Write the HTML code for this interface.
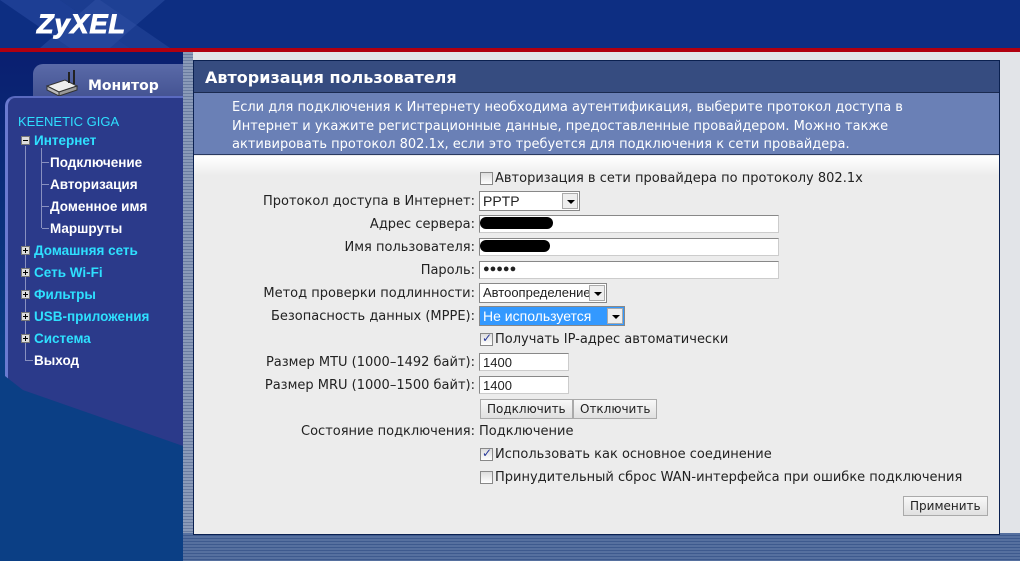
<!DOCTYPE html>
<html><head><meta charset="utf-8"><style>
*{margin:0;padding:0;box-sizing:border-box}
body{width:1020px;height:561px;overflow:hidden;position:relative;background:#0b3f85;font-family:"DejaVu Sans","Liberation Sans",sans-serif;font-size:13px;color:#222}
.a{position:absolute}
#hdr{left:0;top:0;width:1020px;height:48px;background:#0d2e82;overflow:hidden}
#red{left:0;top:48px;width:1020px;height:4px;background:#b00010}
#logo{left:37px;top:9px;color:#fff;font:italic bold 27px "Liberation Sans",sans-serif;letter-spacing:1px;-webkit-text-stroke:1px #fff}
#side{left:0;top:52px;width:183px;height:509px;background:linear-gradient(#0a1f70,#0b3f85 60%)}
#tab{left:33px;top:64px;width:150px;height:44px;background:linear-gradient(#5a6aa8,#3d4c8c);border-radius:10px 0 0 0}
#tab span{position:absolute;left:55px;top:14px;color:#fff;font-weight:bold;font-size:14px}
#nav{left:5px;top:96px;width:178px;height:350px;background:#2b3a8a;border-radius:10px 0 0 0;border-left:3px solid #6a7ad0;border-top:2px solid #5a6ac0;clip-path:polygon(0 0,100% 0,100% 100%,10% 84%,0 80%)}
.n{position:absolute;font:bold 13.5px "Liberation Sans",sans-serif;color:#fff}
.c{color:#2ee0ff}
.pm{position:absolute;width:9px;height:9px;background:#ddd;border:1px solid #777}
.pm::before{content:"";position:absolute;left:1px;top:3px;width:5px;height:1px;background:#000}
.pm.p::after{content:"";position:absolute;left:3px;top:1px;width:1px;height:5px;background:#000}
.h{position:absolute;height:1px;border-top:1px solid #8890c0}
#cont{left:183px;top:52px;width:837px;height:509px;background:linear-gradient(90deg,#b8bcc8,#e2e4e8 10px,#e2e4e8)}
#stripe{left:183px;top:533px;width:837px;height:28px;background:repeating-linear-gradient(#56709f 0 2px,#3e5a8e 2px 3px)}
#lstripe{left:183px;top:52px;width:10px;height:509px;background:repeating-linear-gradient(#8a9ab8 0 2px,#6a7ca0 2px 3px)}
#panel{left:193px;top:60px;width:807px;height:475px;border:1px solid #0a2050;background:#ececec}
#title{left:194px;top:61px;width:805px;height:32px;background:#364c80;color:#fff;font-weight:bold;font-size:16px;padding:7px 0 0 11px;border-bottom:1px solid #1a2a50}
#desc{left:194px;top:93px;width:805px;height:62px;background:#6a80b6;color:#fff;padding:6px 0 0 38px;line-height:18.5px;font-size:13px;border-bottom:1px solid #2a3a60}
#form{left:194px;top:156px;width:805px;height:378px;background:linear-gradient(#fff,#ececec 20px)}
.l{position:absolute;right:545px;white-space:nowrap}
.t{position:absolute;left:495px;white-space:nowrap}
.cb{position:absolute;left:480px;width:13px;height:13px;border:1px solid #888;background:linear-gradient(#ddd,#fff)}
.cb.on::after{content:"✓";position:absolute;left:1px;top:-3px;font-size:12px;color:#2a3a9a;font-weight:bold}
.in{position:absolute;left:479px;height:18px;background:#fff;border:1px solid #999;border-color:#888 #ccc #ccc #888;font:13px "Liberation Sans",sans-serif;padding:1px 3px}
.sel{position:absolute;left:479px;height:20px;background:#fff;border:1px solid #888;font:14px "Liberation Sans",sans-serif;padding:1px 3px;white-space:nowrap;overflow:hidden}
.arr{position:absolute;right:1px;top:1px;width:16px;height:16px;background:#eee;border:1px solid #aaa}
.arr::after{content:"";position:absolute;left:4px;top:6px;border:4px solid transparent;border-top:4px solid #000}
.btn{position:absolute;height:20px;background:linear-gradient(#f8f8f8,#e0e0e0);border:1px solid #aaa;font-size:12px;padding:2px 6px;color:#222}
.blot{position:absolute;height:12px;background:#000;border-radius:6px}
</style></head><body>
<div id="hdr" class="a">
<svg width="520" height="48" style="position:absolute;left:0;top:0"><path d="M0 0L60 0L130 48L70 48Z" fill="#1d3e94"/><path d="M95 0L165 0L110 48L40 48Z" fill="#2a4ca0" opacity=".6"/><path d="M100 0L170 48L130 48L60 0Z" fill="#3252a6" opacity=".4"/></svg>
</div>
<div id="logo" class="a">ZyXEL</div>
<div id="red" class="a"></div>
<div id="side" class="a"></div>
<div id="tab" class="a"><svg width="40" height="32" style="position:absolute;left:10px;top:4px"><path d="M4 18L22 12L34 18L16 24Z" fill="#eee" stroke="#333"/><path d="M4 18L4 22L16 28L16 24Z" fill="#bbb" stroke="#333"/><path d="M16 24L34 18L34 22L16 28Z" fill="#999" stroke="#333"/><line x1="26" y1="4" x2="26" y2="15" stroke="#222" stroke-width="2"/><line x1="31" y1="2" x2="31" y2="16" stroke="#222" stroke-width="2"/></svg><span>Монитор</span></div>
<div id="nav" class="a"></div>
<div class="n c" style="left:18px;top:114px;font-weight:normal;font-size:13px">KEENETIC GIGA</div>
<div class="a" style="left:25px;top:146px;width:1px;height:215px;border-left:1px solid #8890c0"></div>
<div class="a" style="left:41px;top:148px;width:1px;height:80px;border-left:1px solid #8890c0"></div>
<div class="h" style="left:42px;top:162px;width:7px"></div>
<div class="h" style="left:42px;top:184px;width:7px"></div>
<div class="h" style="left:42px;top:206px;width:7px"></div>
<div class="h" style="left:42px;top:228px;width:7px"></div>
<div class="h" style="left:26px;top:360px;width:7px"></div>
<div class="pm" style="left:21px;top:136px"></div>
<div class="n c" style="left:34px;top:133px">Интернет</div>
<div class="n" style="left:50px;top:155px">Подключение</div>
<div class="n" style="left:50px;top:177px">Авторизация</div>
<div class="n" style="left:50px;top:199px">Доменное имя</div>
<div class="n" style="left:50px;top:221px">Маршруты</div>
<div class="pm p" style="left:21px;top:246px"></div><div class="n c" style="left:34px;top:243px">Домашняя сеть</div>
<div class="pm p" style="left:21px;top:268px"></div><div class="n c" style="left:34px;top:265px">Сеть Wi-Fi</div>
<div class="pm p" style="left:21px;top:290px"></div><div class="n c" style="left:34px;top:287px">Фильтры</div>
<div class="pm p" style="left:21px;top:312px"></div><div class="n c" style="left:34px;top:309px">USB-приложения</div>
<div class="pm p" style="left:21px;top:334px"></div><div class="n c" style="left:34px;top:331px">Система</div>
<div class="n" style="left:34px;top:353px">Выход</div>
<div id="cont" class="a"></div>
<div id="lstripe" class="a"></div>
<div id="stripe" class="a"></div>
<div id="panel" class="a"></div>
<div id="title" class="a">Авторизация пользователя</div>
<div id="desc" class="a">Если для подключения к Интернету необходима аутентификация, выберите протокол доступа в<br>Интернет и укажите регистрационные данные, предоставленные провайдером. Можно также<br>активировать протокол 802.1x, если это требуется для подключения к сети провайдера.</div>
<div id="form" class="a"></div>
<div class="cb" style="top:172px"></div><div class="t" style="top:171px">Авторизация в сети провайдера по протоколу 802.1x</div>
<div class="l" style="top:194px">Протокол доступа в Интернет:</div>
<div class="sel" style="top:191px;width:101px">PPTP<div class="arr"></div></div>
<div class="l" style="top:217px">Адрес сервера:</div>
<div class="in" style="top:215px;width:300px"></div><div class="blot" style="left:480px;top:217px;width:73px"></div>
<div class="l" style="top:240px">Имя пользователя:</div>
<div class="in" style="top:238px;width:300px"></div><div class="blot" style="left:480px;top:240px;width:70px"></div>
<div class="l" style="top:263px">Пароль:</div>
<div class="in" style="top:261px;width:300px;font-size:11px;line-height:13px">●●●●●</div>
<div class="l" style="top:286px">Метод проверки подлинности:</div>
<div class="sel" style="top:283px;width:128px;font-size:13px">Автоопределение<div class="arr"></div></div>
<div class="l" style="top:309px">Безопасность данных (MPPE):</div>
<div class="sel" style="top:306px;width:146px;background:#3399ff;color:#fff">Не используется<div class="arr"></div></div>
<div class="cb on" style="top:333px"></div><div class="t" style="top:332px">Получать IP-адрес автоматически</div>
<div class="l" style="top:355px">Размер MTU (1000–1492 байт):</div>
<div class="in" style="top:353px;width:90px">1400</div>
<div class="l" style="top:378px">Размер MRU (1000–1500 байт):</div>
<div class="in" style="top:376px;width:90px">1400</div>
<div class="btn" style="left:480px;top:399px">Подключить</div>
<div class="btn" style="left:573px;top:399px">Отключить</div>
<div class="l" style="top:424px">Состояние подключения:</div>
<div class="t" style="left:479px;top:424px">Подключение</div>
<div class="cb on" style="top:448px"></div><div class="t" style="top:447px">Использовать как основное соединение</div>
<div class="cb" style="top:471px"></div><div class="t" style="top:470px">Принудительный сброс WAN-интерфейса при ошибке подключения</div>
<div class="btn" style="left:903px;top:496px;height:20px">Применить</div>
</body></html>
